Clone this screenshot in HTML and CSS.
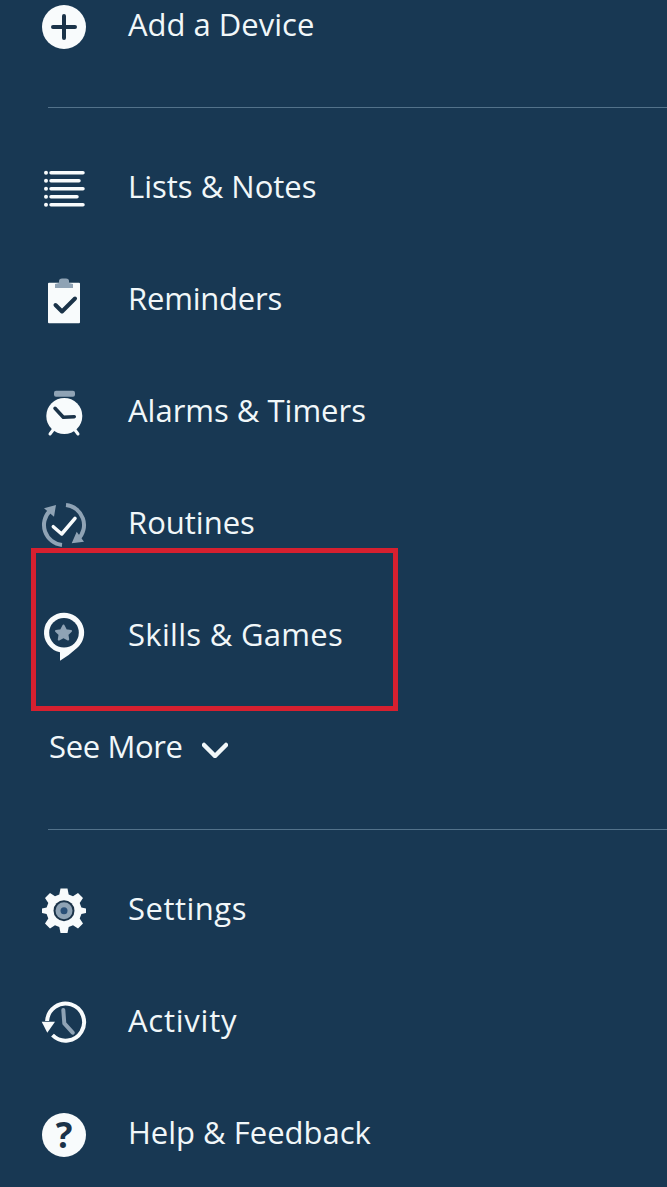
FILE: index.html
```html
<!DOCTYPE html>
<html lang="en">
<head>
<meta charset="utf-8">
<title>Menu</title>
<link rel="stylesheet" href="styles.css">
</head>
<body>
<main class="menu">
  <a class="row row-first">
    <svg class="icon" viewBox="0 0 44 48"><circle class="fill-white" cx="22" cy="26" r="22"/><path class="ink" d="M11 26H33M22 15V37"/></svg>
    <span class="label">Add a Device</span>
  </a>
  <hr class="divider divider-a">
  <a class="row">
    <svg class="icon" viewBox="0 0 44 48">
      <g class="fill-white"><circle cx="4" cy="9.7" r="2"/><circle cx="4" cy="17.7" r="2"/><circle cx="4" cy="25.7" r="2"/><circle cx="4" cy="33.7" r="2"/><circle cx="4" cy="41.7" r="2"/></g>
      <path class="line" d="M9 9.7H41M9 17.7H37M9 25.7H41M9 33.7H35M9 41.7H41"/>
    </svg>
    <span class="label">Lists &amp; Notes</span>
  </a>
  <a class="row">
    <svg class="icon" viewBox="0 0 44 48">
      <rect class="fill-white" x="6" y="7.7" width="32" height="40.6" rx="1"/>
      <path class="fill-grey" d="M13 13V9L17 8V6Q17 3.500 20 3.500H24Q27 3.500 27 6V8L31 9V13Z"/>
      <path class="ink" d="M13.500 30L20 36.500L33 23.500"/>
    </svg>
    <span class="label label-tight">Reminders</span>
  </a>
  <a class="row">
    <svg class="icon" viewBox="0 0 44 48">
      <rect class="fill-grey" x="12" y="3.700" width="21" height="6" rx="2"/>
      <path class="line-thin" d="M8 47L11 43M36 47L33 43"/>
      <circle class="fill-white" cx="22.300" cy="29" r="18"/>
      <path class="ink-thin" d="M13 21.300L21.300 30.300L32.300 29.700"/>
    </svg>
    <span class="label">Alarms &amp; Timers</span>
  </a>
  <a class="row">
    <svg class="icon" viewBox="0 0 44 48">
      <path class="ring-grey" d="M24 6.100A20 20 0 0 1 36 40.300M20 45.900A20 20 0 0 1 8 11.700"/>
      <path class="fill-grey" d="M2 9.300L14 6L12 17.700ZM29.700 44.300L42 42.700L34.700 32.700Z"/>
      <path class="line" d="M11.300 27.700L19.700 35L33 19.300"/>
    </svg>
    <span class="label">Routines</span>
  </a>
  <a class="row">
    <svg class="icon" viewBox="0 0 44 48">
      <path class="fill-white" d="M22 1.700A20 20 0 0 1 35 37Q27 44.500 18 49.700V41.300A20 20 0 0 1 22 1.700Z"/>
      <circle class="fill-bg" cx="22" cy="21.700" r="14.800"/>
      <path class="star" d="M21.500 14.500L24 19.300L29 20L25.400 23.500L26.200 28.500L21.500 26.200L16.800 28.500L17.600 23.500L14 20L19 19.300Z"/>
    </svg>
    <span class="label label-wide">Skills &amp; Games</span>
  </a>
  <a class="row row-more">
    <span class="label label-more">See More</span>
    <svg class="chevron" viewBox="0 0 26 16"><path d="M2 3L13 14L24 3"/></svg>
  </a>
  <hr class="divider divider-b">
  <a class="row">
    <svg class="icon" viewBox="0 0 44 48">
      <path class="fill-white" d="M18.500 3.500H25.500L26.700 9.500L31 11.300L36 8L41 13L37.700 18L39.400 22.500L44 23.500V28L39.400 29L37.700 33.500L41 38.500L36 43.500L31 40.200L26.700 42L25.500 48H18.500L17.300 42L13 40.200L8 43.500L3 38.500L6.300 33.500L4.600 29L0 28V23.500L4.600 22.500L6.300 18L3 13L8 8L13 11.300L17.300 9.500Z"/>
      <circle class="fill-ink" cx="22" cy="25.700" r="10.500"/>
      <circle class="fill-grey" cx="22" cy="25.700" r="8.500"/>
      <circle class="fill-blue" cx="22" cy="25.700" r="3.500"/>
    </svg>
    <span class="label label-wider">Settings</span>
  </a>
  <a class="row">
    <svg class="icon" viewBox="0 0 44 48">
      <path class="line-grey" d="M21.300 13L22.300 26.300L30.700 35.700"/>
      <path class="ring-white" d="M5.100 24A18.500 18.500 0 1 1 10.500 38.200"/>
      <path class="fill-white" d="M-.3 24.700H13L5.300 35.700Z"/>
    </svg>
    <span class="label label-widest">Activity</span>
  </a>
  <a class="row">
    <svg class="icon" viewBox="0 0 44 48">
      <circle class="fill-white" cx="22" cy="26" r="22"/>
      <text class="qmark" x="22" y="39" text-anchor="middle">?</text>
    </svg>
    <span class="label">Help &amp; Feedback</span>
  </a>
  <div class="highlight"></div>
</main>
</body>
</html>
```
FILE: styles.css
```css
html, body {
  margin: 0;
  padding: 0;
  height: 100%;
  background: #183853;
}
body { overflow: hidden; }
.menu {
  position: relative;
  display: flex;
  flex-direction: column;
  height: 1187px;
  font-family: "Open Sans", "Noto Sans", sans-serif;
  color: #f1f7f9;
}
.row {
  display: flex;
  align-items: center;
  flex: none;
  height: 112px;
  padding-left: 42px;
  gap: 42px;
}
.row-first { height: 50px; }
.row-more { padding-left: 49px; gap: 19px; }
.label {
  font-size: 31px;
  line-height: 40px;
  margin-top: -2px;
  white-space: nowrap;
}
.label-more { letter-spacing: -0.35px; }
.label-tight { letter-spacing: -0.2px; }
.label-wide { letter-spacing: 0.3px; }
.label-wider { letter-spacing: 0.5px; }
.label-widest { letter-spacing: 0.75px; }
.icon {
  flex: none;
  width: 44px;
  height: 48px;
  overflow: visible;
}
.chevron {
  flex: none;
  width: 26px;
  height: 16px;
  margin-top: 6px;
  fill: none;
  stroke: #f1f7f9;
  stroke-width: 4.5;
  stroke-linecap: round;
  stroke-linejoin: round;
}
.divider {
  flex: none;
  height: 1px;
  border: 0;
  margin: 0 0 0 48px;
  background: #53728a;
}
.divider-a { margin-top: 57px; margin-bottom: 23px; }
.divider-b { margin-top: 26px; margin-bottom: 23px; }
.highlight {
  position: absolute;
  left: 31px;
  top: 548px;
  width: 357px;
  height: 153px;
  border: 5px solid #d6202f;
}
.fill-white { fill: #f8fbfc; }
.fill-grey { fill: #8fa3b5; }
.fill-bg { fill: #183853; }
.fill-ink { fill: #1b3349; }
.fill-blue { fill: #2a5078; }
.star {
  fill: #8fa3b5;
  stroke: #8fa3b5;
  stroke-width: 2;
  stroke-linejoin: round;
}
.ink, .ink-thin, .line, .line-thin, .line-grey, .ring-grey, .ring-white {
  fill: none;
  stroke-linecap: round;
  stroke-linejoin: round;
}
.ink { stroke: #1b3349; stroke-width: 4; }
.ink-thin { stroke: #1b3349; stroke-width: 3.5; }
.line { stroke: #f8fbfc; stroke-width: 3.5; }
.line-thin { stroke: #f8fbfc; stroke-width: 3; }
.line-grey { stroke: #8fa3b5; stroke-width: 4; }
.ring-grey { stroke: #8fa3b5; stroke-width: 4; stroke-linecap: butt; }
.ring-white { stroke: #f8fbfc; stroke-width: 4; stroke-linecap: butt; }
.qmark {
  font-family: "Open Sans", sans-serif;
  font-weight: 700;
  font-size: 35px;
  fill: #1b3349;
}
```
